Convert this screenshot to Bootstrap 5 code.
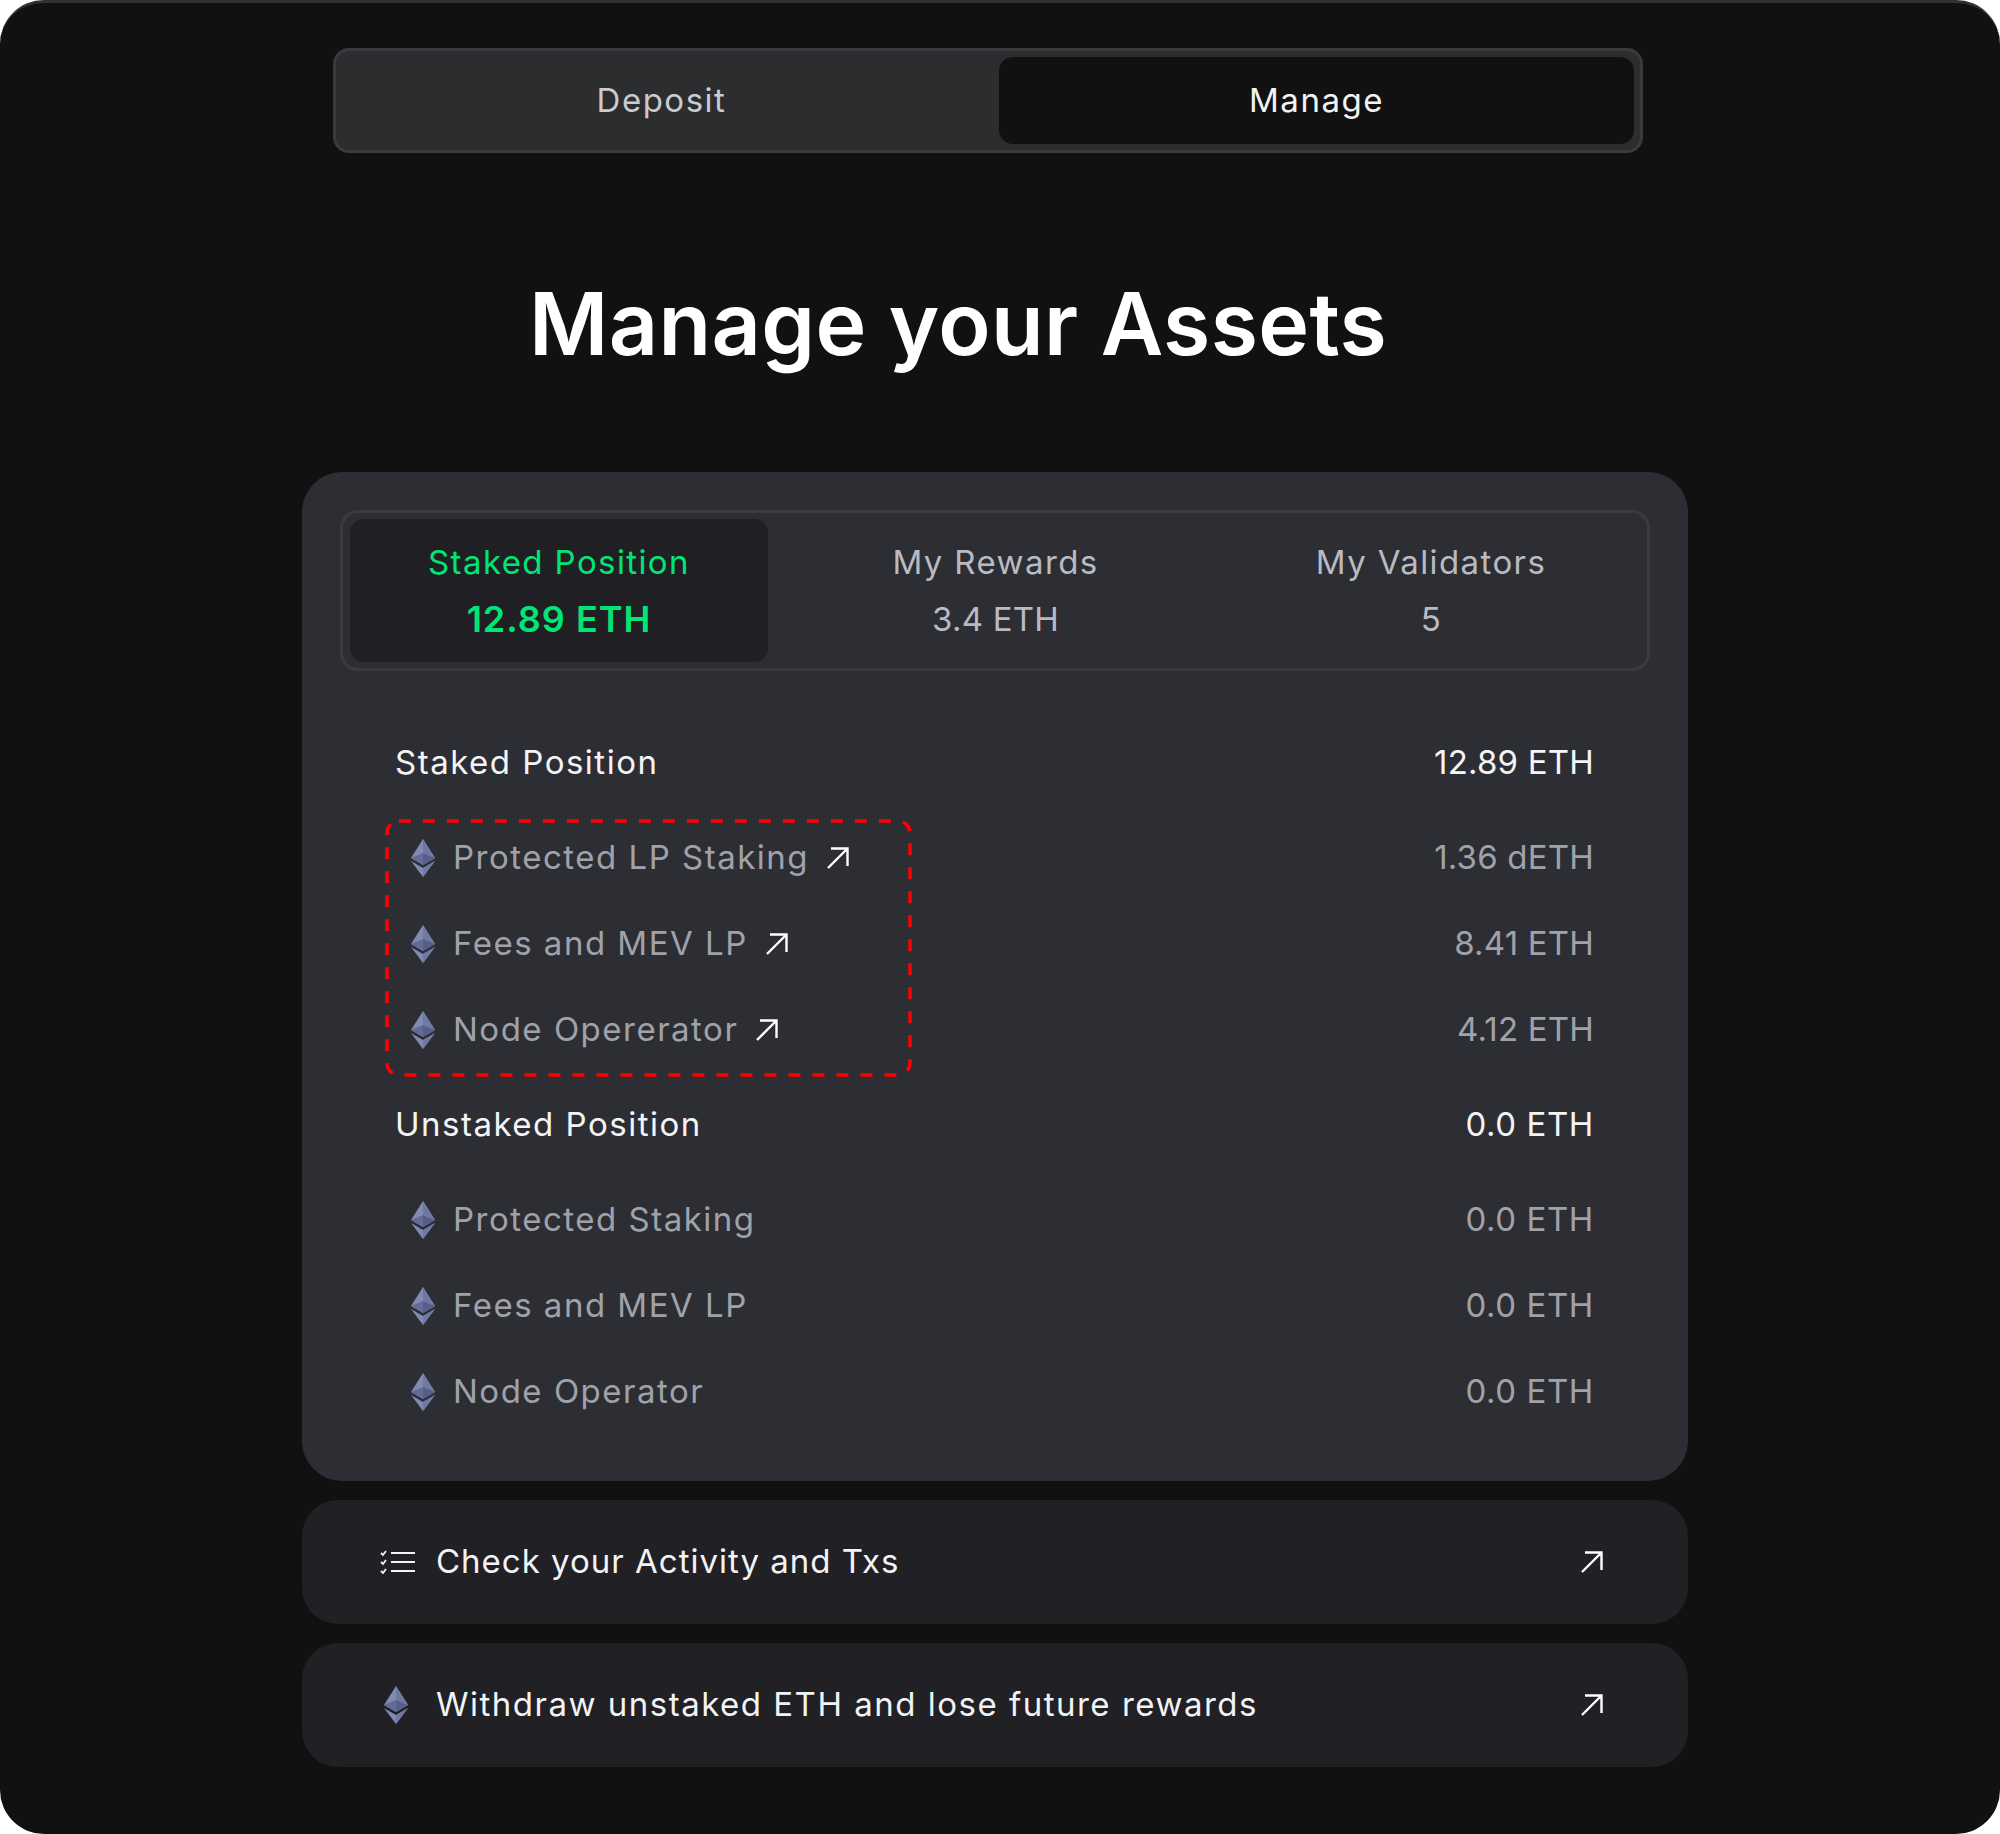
<!doctype html>
<html lang="en"><head><meta charset="utf-8"><title>Manage your Assets</title>
<link href="https://cdn.jsdelivr.net/npm/bootstrap@5.3.0/dist/css/bootstrap.min.css" rel="stylesheet">
<style>
html,body{margin:0;background:#fff}
body{font-family:Inter,"Liberation Sans",sans-serif}
.frame{width:2000px;height:1834px;background:#111112;border-radius:44px;border-top:3px solid #303033;overflow:hidden;padding-top:45px}
.switcher{width:1310px;height:105px;margin-left:333px;background:#2c2d2f;border:3px solid #3a3b3e;border-radius:16px;padding:6px}
.switch-item{flex:1 1 0;font-size:33px;color:#c9cbd0;letter-spacing:1.5px;padding-right:18px}
.switch-item.on{flex:0 0 635px;background:#111112;color:#f2f3f5;border-radius:14px;padding-right:0}
.page-title{font-size:86px;font-weight:600;color:#fff;letter-spacing:.4px;line-height:1;margin:0 0 0 529px;padding-top:128px;height:319px}
.panel{width:1386px;margin-left:302px;background:#2d2e34;border-radius:40px;padding:38px 38px 46px}
.tabs{height:161px;border:3px solid #3a3b41;border-radius:18px;padding:6px 7px}
.tab-item{height:143px;font-size:33px;color:#b9bbc2;line-height:36px;letter-spacing:1.4px}
.tab-item .num{margin-top:21px;letter-spacing:.2px}
.tab-a{width:418px;background:#1f1f24;border-radius:14px;color:#00e676}
.tab-a .num{font-size:36px;font-weight:600;letter-spacing:1px}
.tab-b{width:455px}
.tab-c{width:416px}
.rows{padding:0 56px 0 55px;margin-top:40px;font-size:33px;letter-spacing:1.5px}
.val{letter-spacing:.2px}
.val-z{letter-spacing:.6px}
.row-h{height:104px;color:#f4f4f6}
.row-i{height:86px;color:#a0a2aa;padding-left:16px}
.row-i svg.eth{margin-right:18px}
.row-i .go{margin-left:17px}
.boxed{position:relative}
.dash{position:absolute;left:-10px;top:4px;pointer-events:none}
.wide{width:1386px;margin-left:302px;background:#202025;border-radius:36px;color:#f2f3f5;font-size:33px;letter-spacing:1.5px;padding:0 84px 0 76px}
.w1{height:124px;margin-top:19px;letter-spacing:1px}
.w2{height:124px;margin-top:19px}
.wide-ico{width:58px}
.nudge{margin-left:2px}
.nudge-e{margin-left:6px}
</style></head><body>
<svg width="0" height="0" class="d-block position-absolute"><defs>
<symbol id="eth" viewBox="0 0 24 38">
<polygon points="12,0 0,19 12,26 24,19" fill="#808ab2"/>
<polygon points="12,14 0,19 12,26 24,19" fill="#636c98"/>
<polygon points="12,14 12,26 24,19" fill="#565f8a"/>
<polygon points="12,0 12,14 24,19" fill="#6f79a4"/>
<polygon points="0,22 12,29 24,22 12,38" fill="#808ab2"/>
<polygon points="12,29 24,22 12,38" fill="#6f79a4"/>
</symbol>
<symbol id="arr" viewBox="0 0 24 24">
<path d="M2 22 21.5 2.5M5 2.5h16.5V20" fill="none" stroke="#fff" stroke-width="2.4"/>
</symbol>
</defs></svg>
<div class="frame">
  <div class="switcher d-flex">
    <div class="switch-item d-flex align-items-center justify-content-center">Deposit</div>
    <div class="switch-item on d-flex align-items-center justify-content-center">Manage</div>
  </div>
  <h1 class="page-title">Manage your Assets</h1>
  <div class="panel">
    <div class="tabs d-flex">
      <div class="tab-item tab-a d-flex flex-column align-items-center justify-content-center"><div>Staked Position</div><div class="num">12.89 ETH</div></div>
      <div class="tab-item tab-b d-flex flex-column align-items-center justify-content-center"><div>My Rewards</div><div class="num">3.4 ETH</div></div>
      <div class="tab-item tab-c d-flex flex-column align-items-center justify-content-center"><div>My Validators</div><div class="num">5</div></div>
    </div>
    <div class="rows">
      <div class="row-h d-flex align-items-center justify-content-between"><span>Staked Position</span><span class="val">12.89 ETH</span></div>
      <div class="boxed">
        <svg class="dash" width="527" height="258"><rect x="2" y="2" width="523" height="254" rx="12" fill="none" stroke="#f00" stroke-width="3.5" stroke-dasharray="12 12"/></svg>
        <div class="row-i d-flex align-items-center justify-content-between"><span class="d-flex align-items-center"><svg class="eth" width="24" height="38"><use href="#eth"/></svg>Protected LP Staking<svg class="go" width="24" height="24"><use href="#arr"/></svg></span><span class="val">1.36 dETH</span></div>
        <div class="row-i d-flex align-items-center justify-content-between"><span class="d-flex align-items-center"><svg class="eth" width="24" height="38"><use href="#eth"/></svg>Fees and MEV LP<svg class="go" width="24" height="24"><use href="#arr"/></svg></span><span class="val">8.41 ETH</span></div>
        <div class="row-i d-flex align-items-center justify-content-between"><span class="d-flex align-items-center"><svg class="eth" width="24" height="38"><use href="#eth"/></svg>Node Opererator<svg class="go" width="24" height="24"><use href="#arr"/></svg></span><span class="val">4.12 ETH</span></div>
      </div>
      <div class="row-h d-flex align-items-center justify-content-between"><span>Unstaked Position</span><span class="val-z">0.0 ETH</span></div>
      <div class="row-i d-flex align-items-center justify-content-between"><span class="d-flex align-items-center"><svg class="eth" width="24" height="38"><use href="#eth"/></svg>Protected Staking</span><span class="val-z">0.0 ETH</span></div>
      <div class="row-i d-flex align-items-center justify-content-between"><span class="d-flex align-items-center"><svg class="eth" width="24" height="38"><use href="#eth"/></svg>Fees and MEV LP</span><span class="val-z">0.0 ETH</span></div>
      <div class="row-i d-flex align-items-center justify-content-between"><span class="d-flex align-items-center"><svg class="eth" width="24" height="38"><use href="#eth"/></svg>Node Operator</span><span class="val-z">0.0 ETH</span></div>
    </div>
  </div>
  <div class="wide w1 d-flex align-items-center">
    <span class="wide-ico d-flex"><svg class="nudge" width="36" height="24" viewBox="0 0 36 24" fill="none" stroke="#f2f3f5" stroke-width="2"><path d="M11 3h24M11 12h24M11 21h24"/><path d="M1 3l2 2 3-4M1 12l2 2 3-4M1 21l2 2 3-4" stroke-width="1.8"/></svg></span>
    <span class="flex-grow-1">Check your Activity and Txs</span>
    <svg width="24" height="24"><use href="#arr"/></svg>
  </div>
  <div class="wide w2 d-flex align-items-center">
    <span class="wide-ico d-flex"><svg class="nudge-e" width="24" height="38"><use href="#eth"/></svg></span>
    <span class="flex-grow-1">Withdraw unstaked ETH and lose future rewards</span>
    <svg width="24" height="24"><use href="#arr"/></svg>
  </div>
</div>
<script src="https://cdn.jsdelivr.net/npm/bootstrap@5.3.0/dist/js/bootstrap.bundle.min.js"></script>
</body></html>
